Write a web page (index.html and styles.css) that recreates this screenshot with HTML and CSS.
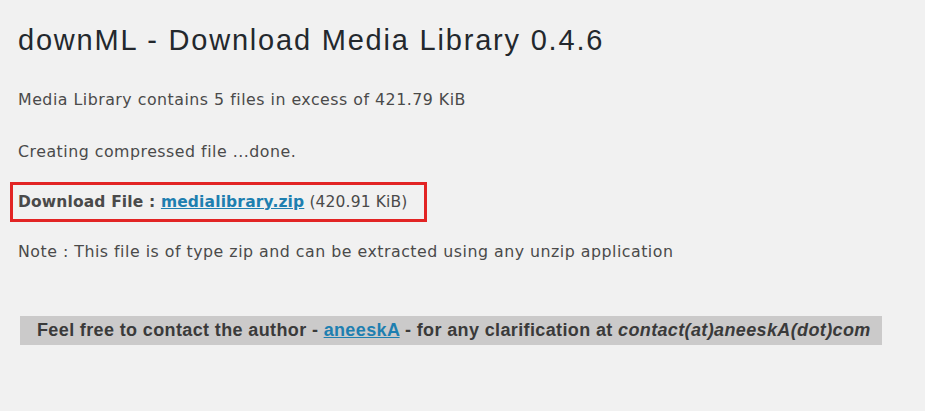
FILE: index.html
```html
<!DOCTYPE html>
<html>
<head>
<meta charset="utf-8">
<link rel="stylesheet" href="styles.css">
</head>
<body>
<div class="wrap">
  <h1 class="title">downML - Download Media Library 0.4.6</h1>
  <p class="line l1">Media Library contains 5 files in excess of 421.79 KiB</p>
  <p class="line l2">Creating compressed file ...done.</p>
  <div class="dlbox"><strong>Download File : </strong><a class="link" href="#">medialibrary.zip</a> (420.91 KiB)</div>
  <p class="line l4">Note : This file is of type zip and can be extracted using any unzip application</p>
  <div class="bar">Feel free to contact the author - <a class="link" href="#">aneeskA</a> - for any clarification at <em>contact(at)aneeskA(dot)com</em></div>
</div>
</body>
</html>
```
FILE: styles.css
```css
html, body { margin: 0; padding: 0; background: #f1f1f1; }
body { font-family: "Liberation Sans", Arial, sans-serif; color: #444; }
.wrap { padding: 20px 0 0 10px; display: flex; flex-direction: column; align-items: flex-start; }
.title { margin: 0 0 0 8px; font-size: 29px; font-weight: 400; line-height: 40px; color: #23282d; letter-spacing: 1.8px; }
.line { margin: 0 0 0 8px; font-family: "DejaVu Sans", sans-serif; font-size: 15.8px; line-height: 20px; color: #4a4a4a; letter-spacing: 0.5px; }
.l1 { margin-top: 30px; }
.l2 { margin-top: 32px; }
.dlbox { margin-top: 20px; border: 3px solid #e22424; padding: 0 0 0 5px; font-family: "DejaVu Sans", sans-serif; font-size: 15.5px; line-height: 34px; box-sizing: border-box; width: 417px; height: 40px; color: #4a4a4a; letter-spacing: 0.15px; }
.dlbox strong { font-weight: 700; }
.link { color: #1e7fb0; text-decoration: underline; font-weight: 700; }
.l4 { margin-top: 20px; }
.bar { margin: 54px 0 0 10px; width: 862px; height: 29px; background: #cbcaca; box-sizing: border-box; padding-left: 17px; font-size: 18px; line-height: 29px; font-weight: 700; color: #3a3a3a; letter-spacing: 0.37px; }
.bar em { font-style: italic; }
```
